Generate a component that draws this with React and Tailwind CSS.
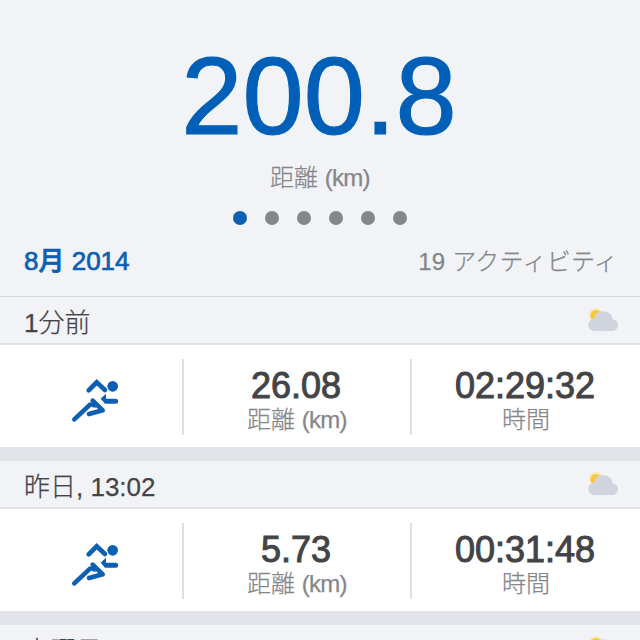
import React from "react";

const SANS = "font-['Liberation_Sans','Noto_Sans_CJK_JP',sans-serif]";

function Runner() {
  return (
    <svg viewBox="0 0 210 210" className="h-[70px] w-[70px]" fill="none" stroke="#0c5fb3" strokeWidth="14">
      <circle cx="158" cy="64" r="16" fill="#0c5fb3" stroke="none" />
      <path d="M86 76L110 52L135 75" strokeLinecap="round" />
      <path d="M138 86L122 101L135 116H167A7.500 7.500 0 0 0 167 101H138Z" fill="#0c5fb3" stroke="none" />
      <path d="M43 163L90 119" strokeLinecap="round" />
      <path d="M98 107L128 136L87 147" strokeLinecap="round" strokeLinejoin="round" />
      <path d="M85 115L97 127L108 128L104 112Z" fill="#0c5fb3" stroke="none" />
    </svg>
  );
}

function Weather() {
  return (
    <svg viewBox="0 0 32 26" className="h-[26px] w-8">
      <circle cx="9" cy="8" r="7" fill="#fbe8b4" />
      <circle cx="9" cy="8.5" r="5.5" fill="#f5c93f" />
      <path d="M7.5 24A6.2 6.2 0 0 1 3.3 13.2C5 12 6 11.8 7 11.7C8.500 6.500 11.500 4.200 16 4.200C22 4.200 25.500 8 25.800 12.500C29 12.800 31 15 31 18C31 21.500 28.500 24 25 24Z" fill="#d0d4df" />
    </svg>
  );
}

function DayHeader({ title }) {
  return (
    <div className="flex h-12 shrink-0 items-center justify-between border-b-2 border-[#e0e1e5] bg-[#f2f3f7] pr-[21px] pl-6">
      <span className="pt-[5px] text-[26px] leading-[36px] font-light text-[#434448] [-webkit-text-stroke:0.25px_#434448]">{title}</span>
      <Weather />
    </div>
  );
}

function Metric({ value, label }) {
  return (
    <div className="mt-[2px] flex h-[76px] flex-col items-center border-l-2 border-[#dfe0e3] pt-[9px]">
      <span className="pr-[2px] text-[36px] leading-[36px] text-[#434448] [-webkit-text-stroke:1px_#434448]">{value}</span>
      <span className="text-[24px] leading-[32px] font-light text-[#85868a] [-webkit-text-stroke:0.25px_#85868a]">{label}</span>
    </div>
  );
}

function Activity({ title, distance, time }) {
  return (
    <section className="shrink-0">
      <DayHeader title={title} />
      <div className="grid h-[102px] grid-cols-[182px_228px_230px] items-center bg-white">
        <div className="flex justify-center pt-[8px] pl-[8px]">
          <Runner />
        </div>
        <Metric value={distance} label={<Distance />} />
        <Metric value={time} label="時間" />
      </div>
      <div className="h-[14px] bg-[#e3e4e9]" />
    </section>
  );
}

function Distance() {
  return (
    <>
      距離 <span className="tracking-[-0.7px]">(km)</span>
    </>
  );
}

const dots = [0, 1, 2, 3, 4, 5];

export default function App() {
  return (
    <main className={`flex h-[640px] w-[640px] flex-col overflow-hidden bg-[#f2f3f7] ${SANS}`}>
      <header className="flex h-[297px] shrink-0 flex-col border-b border-[#d3d4d9]">
        <div className="pt-[41px] pr-[2px] text-center text-[110px] leading-[110px] text-[#0060b8] [-webkit-text-stroke:1.2px_#0060b8]">200.8</div>
        <div className="pt-[11px] text-center text-[24px] leading-[32px] font-light text-[#85868a] [-webkit-text-stroke:0.25px_#85868a]">
          <Distance />
        </div>
        <div className="flex justify-center gap-[18px] pt-[17px]">
          {dots.map((d) => (
            <i key={d} className={`h-[14px] w-[14px] rounded-full ${d === 0 ? "bg-[#0c60b4]" : "bg-[#85868a]"}`} />
          ))}
        </div>
        <div className="flex items-start justify-between pt-[18px] pr-[22px] pl-6 leading-[36px]">
          <span className="text-[26px] font-medium text-[#0c5fb0] [-webkit-text-stroke:0.7px_#0c5fb0]">8月 2014</span>
          <span className="pt-px text-[24px] font-light tracking-[0.25px] text-[#85868a] [-webkit-text-stroke:0.25px_#85868a]">19 アクティビティ</span>
        </div>
      </header>
      <Activity title="1分前" distance="26.08" time="02:29:32" />
      <Activity title="昨日, 13:02" distance="5.73" time="00:31:48" />
      <DayHeader title="土曜日" />
    </main>
  );
}
